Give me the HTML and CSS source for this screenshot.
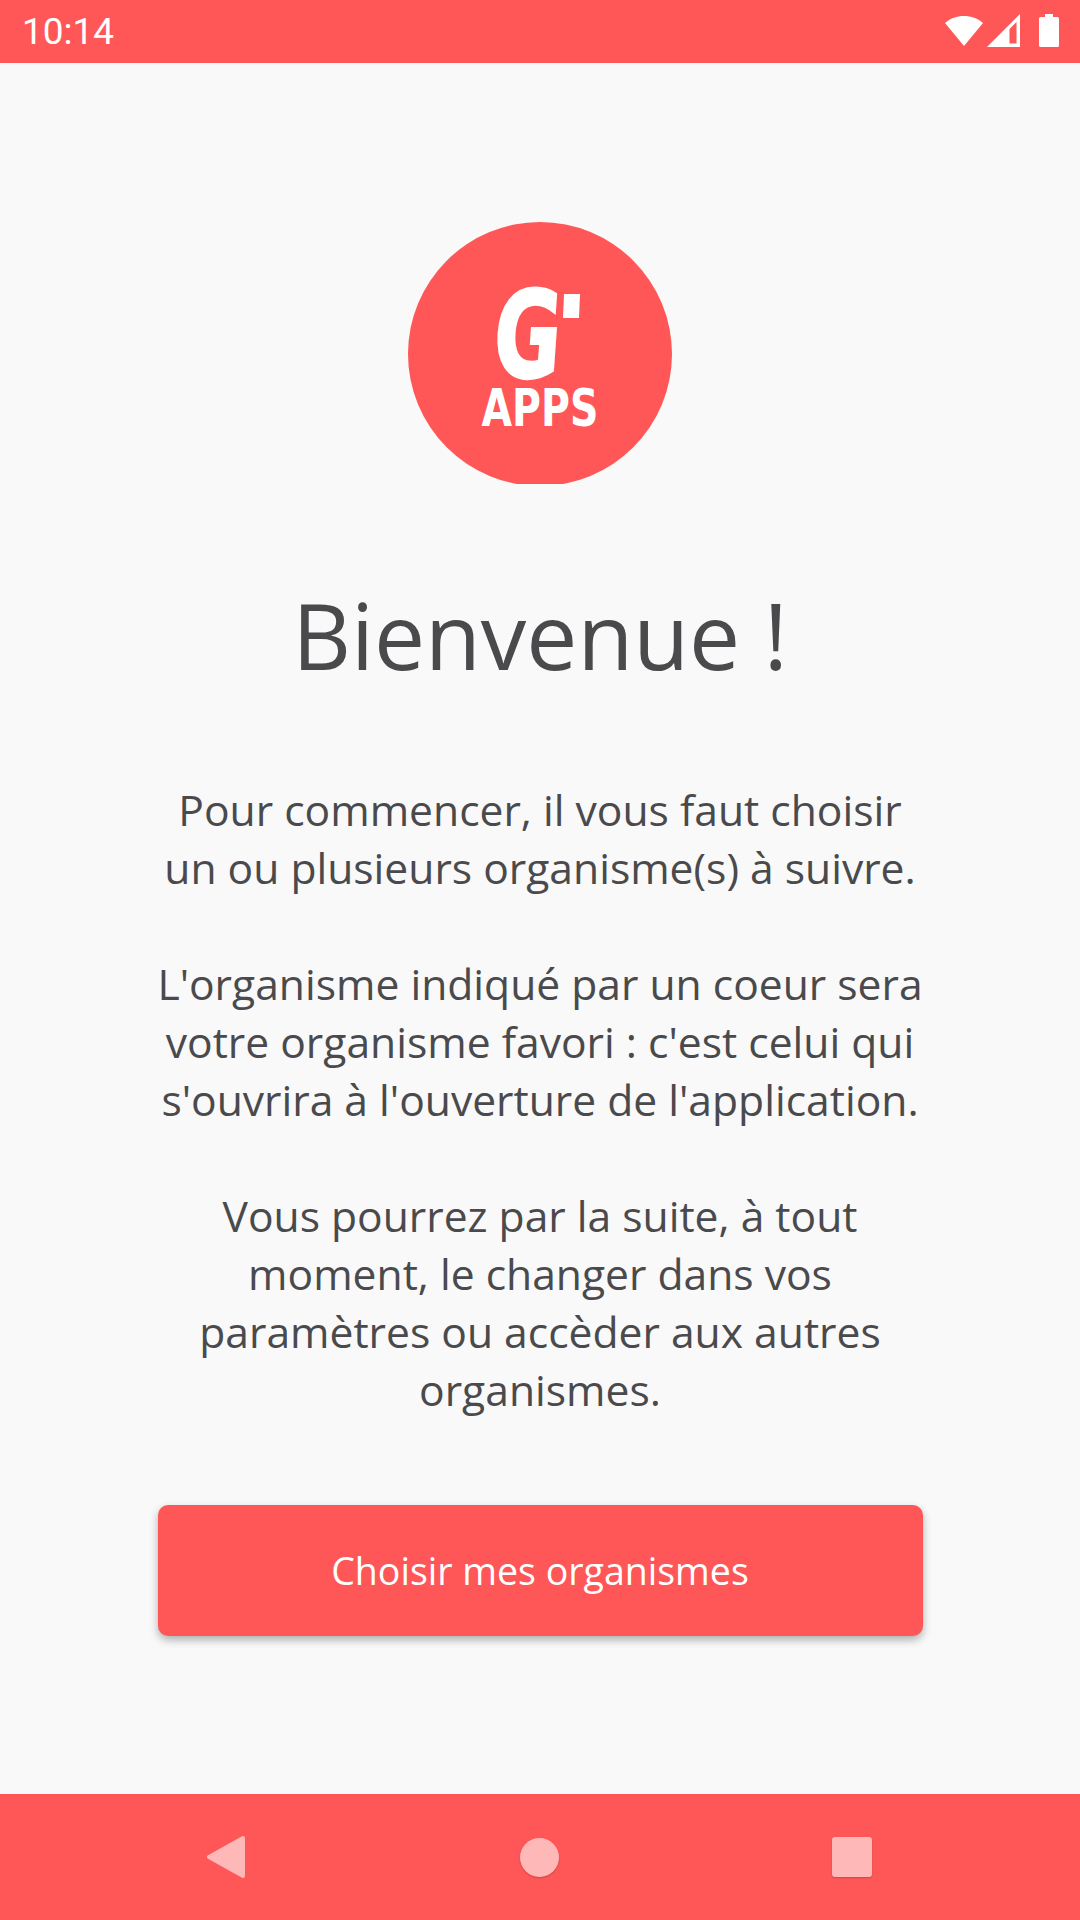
FILE: index.html
```html
<!DOCTYPE html>
<html lang="fr">

<head>
  <title>G' Apps</title>
  <meta charset="utf-8">
  <link rel="stylesheet" href="styles.css">
</head>

<body>
  <div class="status_bar">
    <span class="status_bar__time">10:14</span>
    <svg class="status_bar__icons" width="114" height="33" viewBox="0 0 114 33">
      <path d="M0 9C5 4.500 12 2 19 2s14 2.500 19 7L19 32z" fill="#fff" />
      <path d="M42 33L75 0v33z" fill="#fff" />
      <path d="M64.500 29.500V15l7-7v21.500z" fill="#ff5757" />
      <path d="M95.500 3H100V0h8v3h4.500a1.500 1.500 0 0 1 1.500 1.500v27a1.500 1.500 0 0 1-1.500 1.500h-17a1.500 1.500 0 0 1-1.500-1.500v-27A1.500 1.500 0 0 1 95.500 3z" fill="#fff" />
    </svg>
  </div>

  <div class="main">
    <div class="logo">
      <svg width="264" height="262" viewBox="0 0 264 262">
        <circle cx="132" cy="132" r="132" fill="#ff5757" />
        <text class="logo__g" text-anchor="middle" transform="translate(117 155) skewX(-4) scale(.68 1)">G</text>
        <path d="M156 72h16l-1 24h-16z" fill="#fff" />
        <text class="logo__apps" text-anchor="middle" transform="translate(132 204) scale(.76 1)">APPS</text>
      </svg>
    </div>

    <h1 class="title">Bienvenue !</h1>

    <div class="intro">
      <p>Pour commencer, il vous faut choisir<br>un ou plusieurs organisme(s) à suivre.</p>
      <p>L'organisme indiqué par un coeur sera<br>votre organisme favori : c'est celui qui<br>s'ouvrira à l'ouverture de l'application.</p>
      <p>Vous pourrez par la suite, à tout<br>moment, le changer dans vos<br>paramètres ou accèder aux autres<br>organismes.</p>
    </div>

    <button class="main__button">Choisir mes organismes</button>
  </div>

  <div class="nav_bar">
    <svg width="40" height="44" viewBox="0 0 40 44">
      <path d="M36 3v38L2 22z" fill="#ffb8b8" stroke="#ffb8b8" stroke-width="4" stroke-linejoin="round" />
    </svg>
    <div class="nav_bar__home"></div>
    <div class="nav_bar__recent"></div>
  </div>
</body>

</html>
```

FILE: styles.css
```css
* {
  box-sizing: border-box;
}

html,
body {
  margin: 0px;
  padding: 0px;
}

body {
  width: 1080px;
  height: 1920px;
  display: flex;
  flex-direction: column;
  background-color: #f9f9f9;
  font-family: "Open Sans", sans-serif;
  color: #4a4a4d;
}

.status_bar {
  height: 63px;
  padding: 0px 21px 0px 22px;
  display: flex;
  align-items: center;
  justify-content: space-between;
  background-color: #ff5757;
  color: #fff;
}

.status_bar__time {
  font-family: Roboto, sans-serif;
  font-size: 37px;
  line-height: 63px;
}

.status_bar__icons {
  margin-top: -2px;
}

.main {
  flex: 1;
  display: flex;
  flex-direction: column;
  align-items: center;
  padding-top: 159px;
}

.logo {
  height: 262px;
}

.logo svg {
  display: block;
}

.logo__g {
  font-family: "DejaVu Sans", sans-serif;
  font-weight: bold;
  font-size: 120px;
  fill: #fff;
  stroke: #fff;
  stroke-width: 3px;
}

.logo__apps {
  font-family: "DejaVu Sans", sans-serif;
  font-weight: bold;
  font-size: 52px;
  fill: #fff;
}

.title {
  margin: 91px 0px 0px;
  font-size: 91px;
  font-weight: 400;
  line-height: 120px;
  text-align: center;
}

.intro {
  width: 800px;
  margin-top: 85px;
  font-size: 42.6px;
  line-height: 58px;
  text-align: center;
}

.intro p {
  margin: 0px 0px 58px;
}

.intro p:last-child {
  margin-bottom: 0px;
}

.main__button {
  width: 765px;
  height: 131px;
  margin-top: 87px;
  border: none;
  border-radius: 10px;
  background-color: #ff5757;
  box-shadow: 0px 4px 8px rgba(0, 0, 0, 0.3);
  color: #fff;
  font-family: "Open Sans", sans-serif;
  font-size: 37.5px;
}

.nav_bar {
  height: 126px;
  padding-left: 207px;
  padding-right: 208px;
  display: flex;
  align-items: center;
  justify-content: space-between;
  background-color: #ff5757;
}

.nav_bar__home {
  width: 39px;
  height: 39px;
  border-radius: 50%;
  background-color: #ffb8b8;
  box-shadow: 0px 1px 2px rgba(0, 0, 0, 0.2);
}

.nav_bar__recent {
  width: 40px;
  height: 40px;
  border-radius: 3px;
  background-color: #ffb8b8;
  box-shadow: 0px 1px 2px rgba(0, 0, 0, 0.2);
}
```
